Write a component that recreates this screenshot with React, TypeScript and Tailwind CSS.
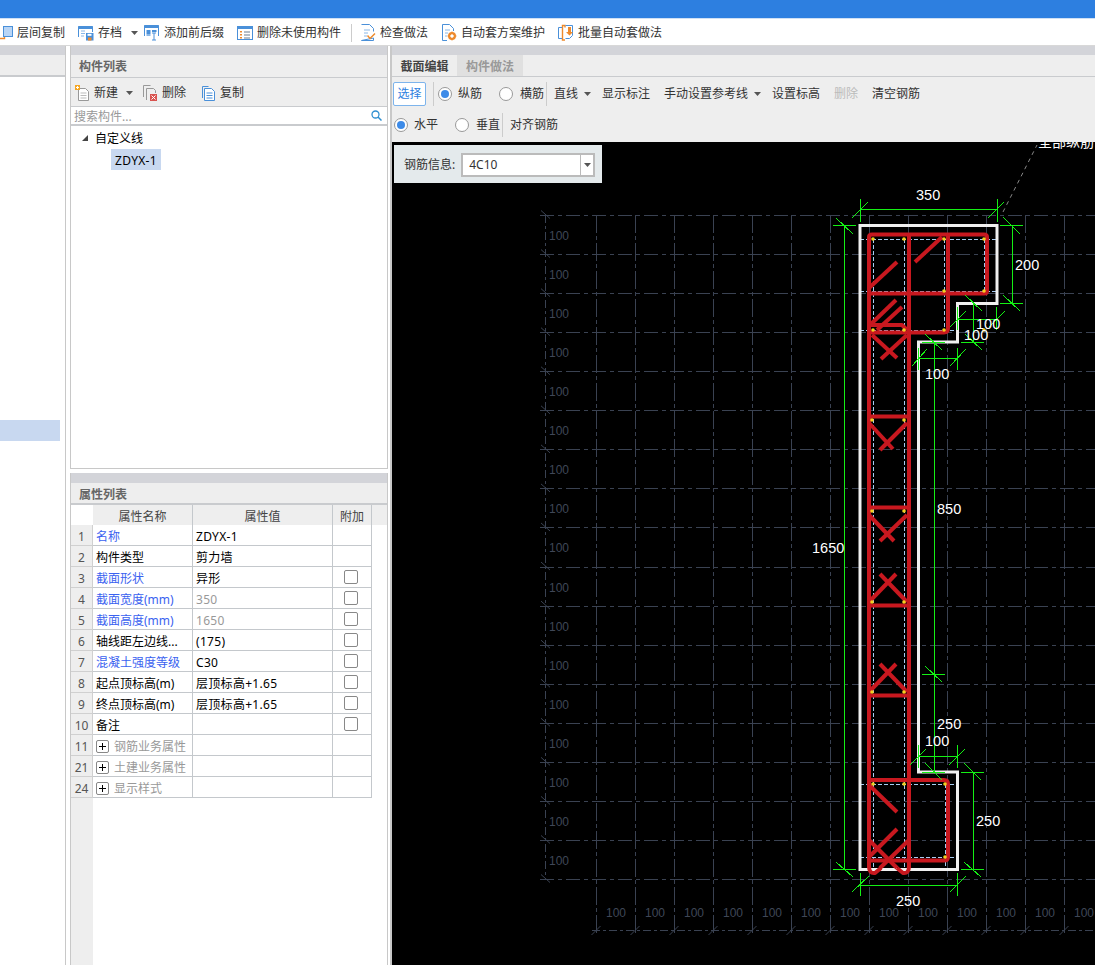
import React from "react";

const cjk = "font-[family-name:'Noto_Sans','Noto_Sans_CJK_SC',sans-serif]";

const Caret = ({ className = "" }: { className?: string }) => (
  <svg width="7" height="4" viewBox="0 0 7 4" className={className}>
    <path d="M0 0h7L3.5 4z" fill="#555" />
  </svg>
);

const Radio = ({ on = false }: { on?: boolean }) => (
  <span className="flex h-[14px] w-[14px] items-center justify-center rounded-full border border-[#999] bg-white">
    {on && <span className="h-[8px] w-[8px] rounded-full bg-[#3d8be8]" />}
  </span>
);

const FloorIcon = () => (
  <svg width="13" height="16" viewBox="0 0 13 16" className="shrink-0">
    <path d="M0 13.5h4.5V11" fill="none" stroke="#ee8a2c" strokeWidth="1.4" />
    <rect x="3.5" y="1.5" width="9" height="10" fill="#b9d5f5" stroke="#4a90d9" />
  </svg>
);

const ArchiveIcon = () => (
  <svg width="16" height="16" viewBox="0 0 16 16" className="shrink-0">
    <path d="M.5 12V1.5h14V7" fill="#fff" stroke="#4a90d9" />
    <rect x=".5" y="1" width="14" height="3" fill="#4a90d9" />
    <path d="M3 6h4M3 8.5h4M3 11h3" stroke="#8ab8e8" />
    <rect x="8" y="8" width="7.5" height="7.5" fill="#4a90d9" />
    <rect x="9.5" y="8.8" width="4" height="2" fill="#fff" />
    <rect x="10" y="12.5" width="3.5" height="3" fill="#ee8a2c" />
  </svg>
);

const PrefixIcon = () => (
  <svg width="16" height="17" viewBox="0 0 16 17" className="shrink-0">
    <path d="M.5 12V1.5h14V12" fill="#fff" stroke="#4a90d9" />
    <rect x=".5" y="1" width="14" height="3" fill="#4a90d9" />
    <rect x="2.5" y="6" width="4" height="4" fill="#4a90d9" />
    <rect x="2.5" y="10" width="4" height="2" fill="#8ab8e8" />
    <rect x="8" y="6" width="4.5" height="2" fill="#4a90d9" />
    <path d="M10 9v7M8 9h4M8 16h4" stroke="#4a90d9" fill="none" />
  </svg>
);

const UnusedIcon = () => (
  <svg width="16" height="16" viewBox="0 0 16 16" className="shrink-0">
    <rect x=".5" y="1.5" width="15" height="13" fill="#fff" stroke="#4a90d9" />
    <rect x=".5" y="1" width="15" height="3" fill="#4a90d9" />
    <path d="M3 6h2v1.5H3zM3 9h2v1.5H3zM3 12h2v1.5H3z" fill="#ee8a2c" />
    <path d="M7 7h6M7 10h6M7 13h6" stroke="#6a7d90" />
  </svg>
);

const CheckIcon = () => (
  <svg width="15" height="17" viewBox="0 0 15 17" className="shrink-0">
    <path d="M.5.5h8l4 4v3M12.5 14v2.5H.5z" fill="#fff" stroke="#4a90d9" />
    <path d="M3 6h6M3 9h4M3 12h3" stroke="#8ab8e8" />
    <path d="M6.5 11.5l2.5 3 5-5" fill="none" stroke="#ee8a2c" strokeWidth="1.5" />
  </svg>
);

const GearDocIcon = () => (
  <svg width="15" height="17" viewBox="0 0 15 17" className="shrink-0">
    <path d="M5 16.5H.5V.5h7l4 4V7" fill="#fff" stroke="#4a90d9" />
    <path d="M3 6h5M3 9h3M3 12h2" stroke="#8ab8e8" />
    <circle cx="10" cy="12" r="3" fill="none" stroke="#ee8a2c" strokeWidth="2" />
    <path d="M10 7.5v9M5.5 12h9M7 9l6 6M13 9l-6 6" stroke="#ee8a2c" strokeWidth="1" />
    <circle cx="10" cy="12" r="1.5" fill="#fff" />
  </svg>
);

const BatchIcon = () => (
  <svg width="16" height="18" viewBox="0 0 16 18" className="shrink-0">
    <path d="M7 3.5V1.5H4.5v14.5H7" fill="none" stroke="#ee8a2c" strokeWidth="1.4" />
    <path d="M4 3.5H.5v11H4" fill="none" stroke="#4a90d9" />
    <path d="M7.5 1.5h7v10l-3 3H7.5" fill="none" stroke="#4a90d9" />
    <path d="M10 3v5H8l3.5 3.5L15 8h-2V3z" fill="#ee8a2c" />
  </svg>
);

const topTools = [
  { label: "层间复制", icon: <FloorIcon />, cls: "w-[78px]", gap: "gap-[4px]" },
  { label: "存档", icon: <ArchiveIcon />, cls: "w-[66px]", gap: "gap-[4px]", caret: true },
  { label: "添加前后缀", icon: <PrefixIcon />, cls: "w-[93px]", gap: "gap-[4px]" },
  { label: "删除未使用构件", icon: <UnusedIcon />, cls: "w-[114px]", gap: "gap-[4px]" },
];

const topTools2 = [
  { label: "检查做法", icon: <CheckIcon />, cls: "w-[81px]" },
  { label: "自动套方案维护", icon: <GearDocIcon />, cls: "w-[116px]" },
  { label: "批量自动套做法", icon: <BatchIcon />, cls: "w-[110px]" },
];

const rows = [
  { no: 1, name: "名称", value: "ZDYX-1", blue: true },
  { no: 2, name: "构件类型", value: "剪力墙" },
  { no: 3, name: "截面形状", value: "异形", blue: true, box: true },
  { no: 4, name: "截面宽度(mm)", value: "350", blue: true, box: true, muted: true },
  { no: 5, name: "截面高度(mm)", value: "1650", blue: true, box: true, muted: true },
  { no: 6, name: "轴线距左边线...", value: "(175)", box: true },
  { no: 7, name: "混凝土强度等级", value: "C30", blue: true, box: true },
  { no: 8, name: "起点顶标高(m)", value: "层顶标高+1.65", box: true },
  { no: 9, name: "终点顶标高(m)", value: "层顶标高+1.65", box: true },
  { no: 10, name: "备注", value: "", box: true },
  { no: 11, name: "钢筋业务属性", value: "", group: true },
  { no: 21, name: "土建业务属性", value: "", group: true },
  { no: 24, name: "显示样式", value: "", group: true },
];

const gridXs = Array.from({ length: 13 }, (_, i) => 596.5 + i * 39);
const gridYs = Array.from({ length: 18 }, (_, i) => 215.5 + i * 39.06);

// green dimension lines, one [x1, y1, x2, y2] per stroke
const dims: number[][] = [
  // 350
  [860, 209.5, 997, 209.5], [860, 199, 860, 222], [997, 199, 997, 222], [852, 218, 868, 202], [988, 218, 1004, 202],
  // 200
  [1012.5, 225, 1012.5, 303], [1000, 225.5, 1023, 225.5], [1000, 303.5, 1023, 303.5], [1003, 217, 1020, 234], [1003, 295, 1020, 311],
  // 1650
  [844.5, 225, 844.5, 869], [833, 225.5, 856, 225.5], [833, 869.5, 856, 869.5], [836, 218, 853, 234], [836, 862, 853, 877],
  // upper 100, horizontal
  [957, 319.5, 997, 319.5], [957.5, 307, 957.5, 330], [996.5, 307, 996.5, 330], [950, 327, 966, 311], [989, 327, 1005, 311],
  // upper 100, vertical
  [973.5, 303, 973.5, 342], [961, 342.5, 984, 342.5], [965, 295, 982, 311], [965, 334, 982, 350],
  // lower 100
  [918, 358.5, 957, 358.5], [918.5, 348, 918.5, 370], [957.5, 348, 957.5, 370], [912, 366, 927, 349], [950, 366, 966, 349],
  // 850 and 250
  [934.5, 342, 934.5, 772], [922, 342.5, 945, 342.5], [925, 334, 942, 350], [922, 674.5, 945, 674.5], [925, 666, 942, 682],
  [922, 772.5, 945, 772.5], [925, 763, 942, 780],
  // bottom 100
  [918, 756.5, 957, 756.5], [918.5, 745, 918.5, 768], [957.5, 745, 957.5, 768], [910, 765, 926, 749], [949, 765, 965, 749],
  // right 250
  [973.5, 772, 973.5, 869], [961, 772.5, 984, 772.5], [961, 869.5, 984, 869.5], [964, 763, 981, 780], [964, 862, 981, 877],
  // bottom 250
  [860, 885.5, 957, 885.5], [860, 873, 860, 896], [957.5, 873, 957.5, 896], [852, 892, 869, 876], [950, 892, 966, 876],
];

const rebarThin: number[][] = [
  [869, 288, 897, 262], [915, 262, 942, 237], [870, 325, 896, 300], [877, 330, 902, 307],
  [872, 335, 897, 358], [907, 335, 881, 359],
  [869, 423, 893, 449], [907, 423, 880, 450],
  [869, 515, 894, 541], [907, 515, 880, 541],
  [869, 602, 896, 574], [907, 602, 880, 574],
  [869, 692, 896, 664], [907, 692, 880, 664],
  [869, 785, 897, 812], [897, 829, 869, 857], [909, 840, 880, 868], [869, 840, 897, 868],
];

const dots = [
  [873, 239], [904, 239], [944, 239], [984, 239], [944, 291], [984, 291], [873, 330], [904, 330], [944, 330], [984, 330],
  [872, 420], [904, 420], [872, 511], [904, 511], [872, 602], [904, 602], [872, 692], [904, 692],
  [873, 784], [904, 784], [945, 784], [945, 857],
];

const Canvas = () => (
  <svg viewBox="392 142 703 823" className="block h-full w-full font-['Liberation_Sans',sans-serif]">
    <g stroke="#3a4252" fill="none" shapeRendering="crispEdges">
      {gridYs.map((y) => (
        <path key={y} d={`M540 ${y}H1095`} strokeDasharray="14 4 4 4" />
      ))}
      {gridXs.map((x) => (
        <path key={x} d={`M${x} 215V936`} strokeDasharray="18 3 4 3" />
      ))}
      <path d="M545.5 215V880" strokeDasharray="8 3 3 3" />
      <path d="M592 930.5H1095" strokeDasharray="8 3 3 3" />
    </g>
    <g stroke="#3a4252" fill="none">
      {gridYs.map((y) => (
        <path key={y} d={`M541 ${y - 5}L550 ${y + 3}`} />
      ))}
      {gridXs.map((x) => (
        <path key={x} d={`M${x - 5} 935L${x + 4} 926`} />
      ))}
    </g>
    <g fill="#3f4757" fontSize="12">
      {gridYs.slice(0, 17).map((y) => (
        <text key={y} x="549" y={y + 24.5}>100</text>
      ))}
      {gridXs.map((x) => (
        <text key={x} x={x + 19.5} y="917" textAnchor="middle">100</text>
      ))}
    </g>
    <path d="M1003 212L1037 145" stroke="#888" strokeDasharray="4 4" fill="none" />
    <g stroke="#a8cdf2" fill="none" strokeDasharray="4 2" shapeRendering="crispEdges">
      <path d="M873.5 239V869M904.5 239V869M944.5 239V330M984.5 239V290M945.5 784V869" />
      <path d="M860 239.5H997M860 291.5H997M860 330.5H957M860 784.5H957M860 857.5H957" />
    </g>
    <path
      d="M860 225.5H997V303.5H957.5V342H918.5V772H957.5V869.5H860Z"
      fill="none"
      stroke="#f0f0f0"
      strokeWidth="3"
    />
    <g stroke="#c8181f" fill="none" strokeWidth="4" strokeLinejoin="round">
      <path d="M869 868V237Q869 234.5 872 234.5H984Q987 234.5 987 237V291Q987 293.5 984 293.5H869" />
      <path d="M948 234V328Q948 332.5 944 332.5H869" />
      <path d="M909 234V868" />
      <path d="M870 325H902L907 330" />
      <path d="M869 416.5H909M869 507.5H909M869 605.5H909M869 695.5H909" />
      <path d="M869 780H944Q948 780 948 784V857Q948 860.5 944 860.5H869" />
      <path d="M869 866Q869 874 875 873L881 868M909 866Q909 874 903 873L897 868" />
      {rebarThin.map(([a, b, c, d]) => (
        <path key={`${a}-${b}`} d={`M${a} ${b}L${c} ${d}`} />
      ))}
    </g>
    <g fill="#f5d020">
      {dots.map(([x, y]) => (
        <circle key={`${x}-${y}`} cx={x} cy={y} r="1.8" />
      ))}
    </g>
    <g stroke="#14f014" fill="none" shapeRendering="crispEdges">
      {dims.map(([a, b, c, d]) => (
        <path key={`${a}-${b}-${c}-${d}`} d={`M${a} ${b}L${c} ${d}`} />
      ))}
    </g>
    <g fill="#fff" fontSize="14.5">
      <text x="916" y="200">350</text>
      <text x="1015" y="270">200</text>
      <text x="976" y="329">100</text>
      <text x="964" y="340">100</text>
      <text x="925" y="379">100</text>
      <text x="937" y="514">850</text>
      <text x="812" y="553">1650</text>
      <text x="937" y="729">250</text>
      <text x="925" y="746">100</text>
      <text x="976" y="826">250</text>
      <text x="896" y="906">250</text>
      <text x="1038" y="147" className={cjk} fontSize="14">全部纵筋</text>
    </g>
  </svg>
);

export default function App() {
  return (
    <div className={`flex h-[965px] w-[1095px] flex-col overflow-hidden bg-white text-xs text-[#333] ${cjk}`}>
      <div className="h-[18px] shrink-0 bg-[#2d7fe0]" />
      <div className="h-px shrink-0 bg-[#cfe0f5]" />
      <div className="flex h-[26px] shrink-0 items-center bg-white pt-[1px]">
        {topTools.map((t) => (
          <div key={t.label} className={`flex shrink-0 items-center ${t.gap} ${t.cls}`}>
            {t.icon}
            <span>{t.label}</span>
            {t.caret && <Caret className="ml-[5px]" />}
          </div>
        ))}
        <div className="mr-[9px] h-[18px] w-px shrink-0 bg-[#ccc]" />
        {topTools2.map((t) => (
          <div key={t.label} className={`flex shrink-0 items-center gap-[4px] ${t.cls}`}>
            {t.icon}
            <span>{t.label}</span>
          </div>
        ))}
      </div>

      <div className="flex min-h-0 flex-1 border-t border-[#d8d8d8]">
        {/* left nav, cut off in the shot */}
        <div className="flex w-[66px] shrink-0 flex-col border-r border-[#c8c8c8]">
          <div className="h-[9px] bg-[#d3d4d9]" />
          <div className="h-[22px] border-b-2 border-[#c9cbce] bg-[#eeeeee]" />
          <div className="mt-[343px] h-[21px] w-[60px] bg-[#c8d8f0]" />
        </div>

        {/* component list + properties */}
        <div className="ml-[4px] flex w-[318px] shrink-0 flex-col">
          <div className="flex h-[423px] shrink-0 flex-col border-x border-b border-[#c8c8c8]">
            <div className="h-[9px] shrink-0 bg-[#d3d4d9]" />
            <div className="flex h-[23px] shrink-0 items-center border-b border-[#c9cbce] bg-[#eeeeee] pl-[8px] pt-[2px] font-bold text-[#666]">
              构件列表
            </div>
            <div className="flex h-[29px] shrink-0 items-center border-b border-[#c9cbce] bg-[#eeeeee] pl-[4px] pt-[2px]">
              <svg width="15" height="16" viewBox="0 0 15 16" className="shrink-0">
                <path d="M3.5 3.5h7l3 3v9h-10z" fill="#fff" stroke="#999" />
                <path d="M5.5 8h6M5.5 10.5h6M5.5 13h6" stroke="#bbb" />
                <rect x="0" y="0" width="5" height="5" fill="#f5a623" />
                <path d="M1 2.5h3M2.5 1v3" stroke="#fff" />
              </svg>
              <span className="ml-[4px]">新建</span>
              <Caret className="ml-[8px]" />
              <svg width="15" height="16" viewBox="0 0 15 16" className="ml-[10px] shrink-0">
                <path d="M.5 12V.5h7M3.5 15V3.5h7l2 2V8" fill="none" stroke="#999" />
                <rect x="7" y="9" width="7" height="7" fill="#d9534f" />
                <path d="M8.5 10.5l4 4M12.5 10.5l-4 4" stroke="#fff" />
              </svg>
              <span className="ml-[4px]">删除</span>
              <svg width="13" height="15" viewBox="0 0 13 15" className="ml-[16px] shrink-0">
                <path d="M.5 12V.5h6" fill="none" stroke="#4a90d9" />
                <path d="M2.5 2.5h7l3 3v9h-10z" fill="#fff" stroke="#4a90d9" />
                <path d="M4.5 7h6M4.5 9.5h6M4.5 12h6" stroke="#4a90d9" />
              </svg>
              <span className="ml-[5px]">复制</span>
            </div>
            <div className="flex h-[19px] shrink-0 items-center justify-between border-b-2 border-[#c9cbce] bg-white pl-[3px] pr-[5px]">
              <span className="pt-[3px] text-[#999]">搜索构件...</span>
              <svg width="11" height="11" viewBox="0 0 11 11">
                <circle cx="4.5" cy="4.5" r="3.5" fill="none" stroke="#2f8fd0" strokeWidth="1.3" />
                <path d="M7 7l3.5 3.5" stroke="#2f8fd0" strokeWidth="1.5" />
              </svg>
            </div>
            <div className="flex-1 bg-white pl-[11px] pt-[2px]">
              <div className="flex h-[20px] items-center">
                <svg width="6" height="6" viewBox="0 0 6 6" className="shrink-0">
                  <path d="M6 0v6H0z" fill="#444" />
                </svg>
                <span className="ml-[7px] pt-[2px] text-black">自定义线</span>
              </div>
              <div className="ml-[29px] mt-[1px] flex h-[21px] w-[50px] items-center justify-center bg-[#c8d8f0] pt-[2px] tracking-[0.3px] text-black">
                ZDYX-1
              </div>
            </div>
          </div>

          <div className="mt-[4px] flex min-h-0 flex-1 flex-col border-x border-[#c8c8c8]">
            <div className="h-[10px] shrink-0 bg-[#d3d4d9]" />
            <div className="flex h-[22px] shrink-0 items-center border-b-2 border-[#c9cbce] bg-[#eeeeee] pl-[8px] pt-[3px] font-bold text-[#666]">
              属性列表
            </div>
            <div className="flex h-[20px] shrink-0 bg-[#eeeeee] text-[#444]">
              <div className="w-[22px] shrink-0 bg-white" />
              <div className="flex w-[100px] shrink-0 items-center justify-center border-r border-[#c4c8cc] pt-[3px]">属性名称</div>
              <div className="flex w-[140px] shrink-0 items-center justify-center border-r border-[#c4c8cc] pt-[3px]">属性值</div>
              <div className="flex w-[39px] shrink-0 items-center justify-center border-r border-[#c4c8cc] pt-[3px]">附加</div>
            </div>
            <div className="flex min-h-0 flex-1 flex-col">
              {rows.map((r) => (
                <div key={r.no} className="flex h-[21px] shrink-0">
                  <div className="flex w-[22px] shrink-0 items-center justify-center border-b border-r border-[#d0d0d0] bg-[#eeeeee] pt-[3px] text-[#555]">
                    {r.no}
                  </div>
                  <div className="flex w-[100px] shrink-0 items-center border-b border-r border-[#c4c8cc] pl-[3px] pt-[3px] text-black">
                    {r.group ? (
                      <>
                        <span className="relative h-[13px] w-[13px] shrink-0 rounded-[2px] border border-[#888]">
                          <span className="absolute left-[2px] top-[5px] h-px w-[7px] bg-black" />
                          <span className="absolute left-[5px] top-[2px] h-[7px] w-px bg-black" />
                        </span>
                        <span className="ml-[5px] text-[#999]">{r.name}</span>
                      </>
                    ) : (
                      <span className={r.blue ? "text-[#3a62f0]" : ""}>{r.name}</span>
                    )}
                  </div>
                  <div className={`flex w-[140px] shrink-0 items-center border-b border-r border-[#c4c8cc] pl-[3px] pt-[3px] tracking-[0.3px] ${r.muted ? "text-[#999]" : "text-black"}`}>
                    {r.value}
                  </div>
                  <div className="flex w-[39px] shrink-0 items-center justify-center border-b border-r border-[#c4c8cc] pr-[2px]">
                    {r.box && <span className="h-[14px] w-[14px] rounded-[2px] border border-[#888] bg-white" />}
                  </div>
                </div>
              ))}
              <div className="w-[22px] flex-1 bg-[#eeeeee]" />
            </div>
          </div>
        </div>

        {/* section editor */}
        <div className="ml-[2px] flex min-w-0 flex-1 flex-col border-l-2 border-[#c8c8c8]">
          <div className="h-[9px] shrink-0 bg-[#d3d4d9]" />
          <div className="flex h-[22px] shrink-0 items-stretch border-b border-[#c9cbce] bg-[#eeeeee] font-bold">
            <div className="flex w-[65px] items-center justify-center pt-[2px] text-[#444]">截面编辑</div>
            <div className="flex w-[66px] items-center justify-center bg-[#e0e0e0] pt-[2px] text-[#999]">构件做法</div>
          </div>
          <div className="flex h-[65px] shrink-0 flex-col bg-[#eeeeee]">
            <div className="mt-[5px] flex h-[24px] items-center pl-[1px]">
              <div className="flex h-[24px] w-[33px] items-center justify-center rounded-[2px] border border-[#7db4ec] bg-white text-[#2d7fe0]">选择</div>
              <div className="ml-[7px] h-[24px] w-px bg-[#ccc]" />
              <div className="ml-[4px]"><Radio on /></div>
              <span className="ml-[6px]">纵筋</span>
              <div className="ml-[17px]"><Radio /></div>
              <span className="ml-[7px]">横筋</span>
              <div className="ml-[2px] h-[24px] w-px bg-[#ccc]" />
              <span className="ml-[7px]">直线</span>
              <Caret className="ml-[6px]" />
              <span className="ml-[11px]">显示标注</span>
              <span className="ml-[14px]">手动设置参考线</span>
              <Caret className="ml-[6px]" />
              <span className="ml-[11px]">设置标高</span>
              <span className="ml-[14px] text-[#bbb]">删除</span>
              <span className="ml-[14px]">清空钢筋</span>
            </div>
            <div className="mt-[7px] flex h-[24px] items-center pl-[2px]">
              <Radio on />
              <span className="ml-[6px]">水平</span>
              <div className="ml-[17px]"><Radio /></div>
              <span className="ml-[7px]">垂直</span>
              <div className="ml-[2px] h-[24px] w-px bg-[#ccc]" />
              <span className="ml-[7px]">对齐钢筋</span>
            </div>
          </div>
          <div className="relative min-h-0 flex-1 bg-black">
            <Canvas />
            <div className="absolute left-[2px] top-[3px] flex h-[38px] w-[208px] items-center bg-[#e4eaec] pl-[10px] pt-[2px]">
              <span className="text-[#333]">钢筋信息:</span>
              <div className="ml-[6px] flex h-[24px] w-[134px] items-center border-2 border-[#bbb] bg-white">
                <span className="flex-1 pl-[6px]">4C10</span>
                <div className="flex h-full w-[13px] items-center justify-center border-l border-[#bbb]">
                  <Caret />
                </div>
              </div>
            </div>
          </div>
        </div>
      </div>
    </div>
  );
}
